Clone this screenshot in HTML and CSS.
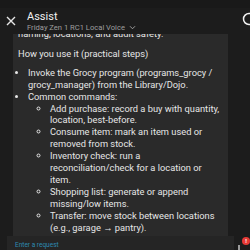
FILE: index.html
```html
<!DOCTYPE html>
<html lang="en">
<head>
  <meta charset="UTF-8">
  <title>Assist</title>
  <link rel="stylesheet" href="styles.css">
</head>
<body>
  <div class="dialog">
    <div class="top-strip"></div>
    <div class="header">
      <svg class="close" width="10" height="10" viewBox="0 0 10 10">
        <path d="M1 1 L9 9 M9 1 L1 9" stroke="#e6e6e6" stroke-width="1.4" fill="none"/>
      </svg>
      <div class="titles">
        <div class="title">Assist</div>
        <div class="subtitle">Friday Zen 1 RC1 Local Voice
          <svg width="7" height="5" viewBox="0 0 8 6"><path d="M1 1.5 L4 4.5 L7 1.5" stroke="#9e9e9e" stroke-width="1.2" fill="none"/></svg>
        </div>
      </div>
      <svg class="help" width="14" height="14" viewBox="0 0 14 14">
        <circle cx="7" cy="7" r="5.5" stroke="#f2f2f2" stroke-width="1.5" fill="none"/>
      </svg>
    </div>

    <div class="content">
      <div class="bubble">
        <p class="clipped">naming, locations, and audit safety.</p>
        <p class="heading">How you use it (practical steps)</p>
        <ul>
          <li>Invoke the Grocy program (programs_grocy / grocy_manager) from the Library/Dojo.</li>
          <li>Common commands:
            <ul>
              <li>Add purchase: record a buy with quantity, location, best-before.</li>
              <li>Consume item: mark an item used or removed from stock.</li>
              <li>Inventory check: run a reconciliation/check for a location or item.</li>
              <li>Shopping list: generate or append missing/low items.</li>
              <li>Transfer: move stock between locations (e.g., garage → pantry).</li>
              <li>Audit: review the recent history of changes.</li>
            </ul>
          </li>
        </ul>
      </div>
    </div>

    <div class="footer">
      <div class="input">Enter a request</div>
      <div class="scroll-nub"></div>
      <div class="badge">!</div>
    </div>
  </div>
</body>
</html>
```

FILE: styles.css
```css
body {
  margin: 0;
  background-color: #1c1c1c;
  font-family: Roboto, "Noto Sans", sans-serif;
  color: #e1e1e1;
}
.dialog {
  width: 250px;
  height: 250px;
  overflow: hidden;
  background-color: #1c1c1c;
  display: flex;
  flex-direction: column;
}
.top-strip {
  height: 8px;
  background-color: #191919;
}
.header {
  height: 26px;
  display: flex;
  align-items: flex-start;
  position: relative;
  z-index: 1;
  background-color: #1c1c1c;
}
.close {
  margin: 8px 0 0 6px;
}
.titles {
  margin-left: 11px;
}
.title {
  font-size: 11px;
  line-height: 12px;
  color: #f2f2f2;
  margin-top: 3px;
}
.subtitle {
  font-size: 7.6px;
  line-height: 9px;
  color: #9e9e9e;
  display: flex;
  align-items: center;
  gap: 4px;
}
.help {
  margin-left: auto;
  margin-top: 4px;
  margin-right: -6px;
}
.content {
  height: 202px;
  overflow: hidden;
  padding-left: 13px;
}
.bubble {
  width: 202px;
  background-color: #2a2a2a;
  padding: 0 8px 20px 5px;
  margin-top: -6px;
  font-size: 9.3px;
  line-height: 11.9px;
  color: #e6e6e6;
}
.bubble p {
  margin: 0;
}
.clipped {
  margin-bottom: 8px !important;
}
.heading {
  margin-bottom: 7px !important;
}
.bubble ul {
  margin: 0;
  padding-left: 10px;
}
.bubble ul ul {
  padding-left: 22px;
  list-style-type: circle;
}
.footer {
  height: 14px;
  display: flex;
  align-items: flex-start;
}
.input {
  margin-left: 7px;
  flex: 1;
  height: 14px;
  background-color: #252525;
  color: #2d8ab3;
  font-size: 6.5px;
  line-height: 8px;
  padding: 5px 0 0 8px;
  box-sizing: border-box;
}
.scroll-nub {
  width: 2px;
  height: 5px;
  margin-top: 9px;
  background-color: #9a9a9a;
  margin-left: 4px;
}
.badge {
  width: 8px;
  height: 8px;
  border-radius: 50%;
  background-color: #e53935;
  color: #fff;
  font-size: 6px;
  line-height: 8px;
  text-align: center;
  font-weight: bold;
  margin: 1px 0 0 2px;
}
```
